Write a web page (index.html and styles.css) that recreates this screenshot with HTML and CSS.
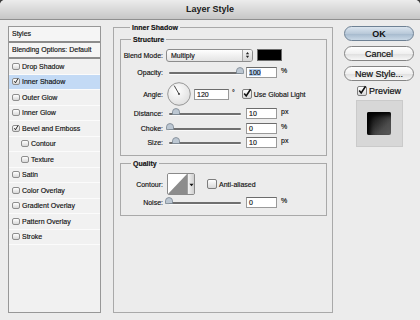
FILE: index.html
```html
<!DOCTYPE html>
<html lang="en">
  <head>
    <meta charset="UTF-8" />
    <title>Layer Style</title>
    <link rel="stylesheet" href="styles.css">
  </head>
  <body>
    <div class="window">
      <div class="titlebar">Layer Style</div>
      <div class="content">
        <!-- left: list of effects -->
        <div class="styles-list">
          <div class="list-head">Styles</div>
          <div class="list-head">Blending Options: Default</div>
          <ul class="effects">
            <li><span class="cb"></span>Drop Shadow</li>
            <li class="selected"><span class="cb"><svg class="tick" viewBox="0 0 10 10"><path d="M1.5 4.5 L4 7.5 L9 -1" /></svg></span>Inner Shadow</li>
            <li><span class="cb"></span>Outer Glow</li>
            <li><span class="cb"></span>Inner Glow</li>
            <li><span class="cb"><svg class="tick" viewBox="0 0 10 10"><path d="M1.5 4.5 L4 7.5 L9 -1" /></svg></span>Bevel and Emboss</li>
            <li class="sub"><span class="cb"></span>Contour</li>
            <li class="sub"><span class="cb"></span>Texture</li>
            <li><span class="cb"></span>Satin</li>
            <li><span class="cb"></span>Color Overlay</li>
            <li><span class="cb"></span>Gradient Overlay</li>
            <li><span class="cb"></span>Pattern Overlay</li>
            <li><span class="cb"></span>Stroke</li>
          </ul>
        </div>

        <!-- middle: settings -->
        <div class="group outer">
          <div class="legend">Inner Shadow</div>
          <div class="group">
            <div class="legend">Structure</div>
            <div class="row blend">
              <label>Blend Mode:</label>
              <div class="select">
                <span>Multiply</span>
                <span class="stepper">
                  <svg viewBox="0 0 6 9"><path d="M1 3.5 L3 1 L5 3.5Z M1 5.5 L3 8 L5 5.5Z" /></svg>
                </span>
              </div>
              <span class="swatch"></span>
            </div>
            <div class="row opacity">
              <label>Opacity:</label>
              <div class="slider"><svg class="thumb" style="left: 74px" viewBox="0 0 8 7"><path d="M0.5 6.5 V3.8 Q0.5 0.8 4 0.5 Q7.5 0.8 7.5 3.8 V6.5Z" /></svg></div>
              <span class="field"><span class="hl">100</span></span>
              <span class="unit">%</span>
            </div>
            <div class="row angle">
              <label>Angle:</label>
              <svg class="dial" viewBox="0 0 24 24">
                <defs>
                  <radialGradient id="dialFill" cx="0.4" cy="0.35" r="0.7">
                    <stop offset="0" stop-color="#ffffff" />
                    <stop offset="1" stop-color="#dedede" />
                  </radialGradient>
                </defs>
                <circle cx="12" cy="12" r="11.3" fill="url(#dialFill)" stroke="#8d8d8d" stroke-width="0.9" />
                <line x1="12" y1="12" x2="7.2" y2="3.6" stroke="#333" stroke-width="0.9" />
                <circle cx="12" cy="12" r="0.9" fill="#333" />
              </svg>
              <span class="field wide">120</span>
              <span class="deg">°</span>
              <span class="cb big"><svg class="tick" viewBox="0 0 10 10"><path d="M1.5 4.5 L4 7.5 L9.5 -1" /></svg></span>
              <span class="cb-label">Use Global Light</span>
            </div>
            <div class="row distance">
              <label>Distance:</label>
              <div class="slider"><svg class="thumb" style="left: 10px" viewBox="0 0 8 7"><path d="M0.5 6.5 V3.8 Q0.5 0.8 4 0.5 Q7.5 0.8 7.5 3.8 V6.5Z" /></svg></div>
              <span class="field">10</span>
              <span class="unit">px</span>
            </div>
            <div class="row choke">
              <label>Choke:</label>
              <div class="slider"><svg class="thumb" style="left: 4px" viewBox="0 0 8 7"><path d="M0.5 6.5 V3.8 Q0.5 0.8 4 0.5 Q7.5 0.8 7.5 3.8 V6.5Z" /></svg></div>
              <span class="field">0</span>
              <span class="unit">%</span>
            </div>
            <div class="row">
              <label>Size:</label>
              <div class="slider"><svg class="thumb" style="left: 10px" viewBox="0 0 8 7"><path d="M0.5 6.5 V3.8 Q0.5 0.8 4 0.5 Q7.5 0.8 7.5 3.8 V6.5Z" /></svg></div>
              <span class="field">10</span>
              <span class="unit">px</span>
            </div>
          </div>

          <div class="group quality">
            <div class="legend">Quality</div>
            <div class="row contour">
              <label>Contour:</label>
              <div class="picker">
                <svg class="curve" viewBox="0 0 20 20" preserveAspectRatio="none">
                  <polygon points="0,0 20,0 0,20" fill="#ffffff" />
                  <polygon points="20,0 20,20 0,20" fill="#8c8c8c" />
                </svg>
                <span class="drop">
                  <svg viewBox="0 0 6 6"><path d="M0.5 2 L5.5 2 L3 5Z" /></svg>
                </span>
              </div>
              <span class="cb big"></span>
              <span class="cb-label">Anti-aliased</span>
            </div>
            <div class="row">
              <label>Noise:</label>
              <div class="slider"><svg class="thumb" style="left: 3px" viewBox="0 0 8 7"><path d="M0.5 6.5 V3.8 Q0.5 0.8 4 0.5 Q7.5 0.8 7.5 3.8 V6.5Z" /></svg></div>
              <span class="field">0</span>
              <span class="unit">%</span>
            </div>
          </div>
        </div>

        <!-- right: buttons and preview -->
        <div class="actions">
          <button class="btn default">OK</button>
          <button class="btn">Cancel</button>
          <button class="btn">New Style...</button>
          <div class="preview-toggle">
            <span class="cb big"><svg class="tick" viewBox="0 0 10 10"><path d="M1.5 4.5 L4 7.5 L9.5 -1" /></svg></span>
            <span>Preview</span>
          </div>
          <div class="preview">
            <div class="sample"></div>
          </div>
        </div>
      </div>
    </div>
  </body>
</html>
```

FILE: styles.css
```css
* {
  margin: 0;
  padding: 0;
  box-sizing: border-box;
}
body {
  background-color: #3a3a3a;
  font-family: "Liberation Sans", Arial, sans-serif;
  font-size: 7px;
  color: #111;
  -webkit-text-stroke: 0.15px #111;
}
.window {
  width: 420px;
  height: 320px;
  background-color: #ececec;
  border-radius: 5px 5px 0 0;
  overflow: hidden;
}
.titlebar {
  height: 20px;
  line-height: 19px;
  text-align: center;
  font-size: 9px;
  font-weight: bold;
  color: #202020;
  -webkit-text-stroke: 0;
  background: linear-gradient(#ececec, #d9d9d9 50%, #c6c6c6);
  border-bottom: 1px solid #8f8f8f;
}
.content {
  display: flex;
  align-items: flex-start;
  padding: 6px 0 0 8px;
}

/* styles list */
.styles-list {
  width: 93px;
  height: 287px;
  border: 1px solid #979797;
  background-color: #f1f1f1;
}
.list-head {
  height: 16px;
  line-height: 14px;
  padding-left: 3px;
  background-color: #f5f5f5;
  border-bottom: 2px solid #8c8c8c;
}
.effects {
  list-style: none;
}
.effects li {
  height: 15.5px;
  display: flex;
  align-items: center;
  gap: 2px;
  padding-left: 3px;
  border-bottom: 1px solid #fbfbfb;
}
.effects li.sub {
  padding-left: 12px;
}
.effects li.selected {
  background-color: #c3daf5;
}

/* checkboxes */
.cb {
  position: relative;
  display: inline-block;
  flex: none;
  width: 8px;
  height: 7px;
  border: 1px solid #8e8e8e;
  border-radius: 2px;
  background: linear-gradient(#ffffff, #d8d8d8);
}
.cb.big {
  width: 10px;
  height: 10px;
  border-color: #7d7d7d;
  border-radius: 2px;
}
.tick {
  position: absolute;
  left: 0;
  top: 0;
  width: 100%;
  height: 100%;
  overflow: visible;
}
.tick path {
  fill: none;
  stroke: #111;
  stroke-width: 1.8;
}
.cb.big .tick path {
  stroke-width: 2;
}
.cb-label {
  margin-left: 2px;
}

/* group boxes */
.group {
  border: 1px solid #a9a9a9;
  padding: 0 0 6px;
}
.legend {
  width: max-content;
  margin: -5px 0 0 10px;
  padding: 0 2px;
  line-height: 9px;
  font-weight: bold;
  background-color: #ececec;
}
.outer {
  width: 220px;
  height: 286px;
  margin: 1px 0 0 12px;
  padding: 0 5px 0 6px;
}
.outer > .group {
  margin-top: 7px;
}

/* rows */
.row {
  display: flex;
  align-items: center;
  height: 14px;
}
.row label {
  width: 42px;
  margin-right: 3px;
  text-align: right;
  flex: none;
}
.row.blend {
  margin-top: 4px;
}
.row.opacity {
  margin-top: 3px;
}
.row.angle {
  height: 24px;
  margin-top: 3px;
}
.row.choke {
  margin-top: 1px;
}
.select {
  display: flex;
  align-items: center;
  justify-content: space-between;
  width: 87px;
  height: 13px;
  padding-left: 4px;
  border: 1px solid #8c8c8c;
  border-radius: 3px;
  background: linear-gradient(#ffffff, #f1f1f1 50%, #e4e4e4);
}
.stepper {
  display: flex;
  align-items: center;
  justify-content: center;
  width: 10px;
  height: 100%;
  border-left: 1px solid #a8a8a8;
  background: linear-gradient(#f6f6f6, #d6d6d6);
  border-radius: 0 2px 2px 0;
}
.stepper svg {
  width: 5px;
  height: 8px;
  fill: #222;
}
.swatch {
  width: 25px;
  height: 12px;
  margin-left: 4px;
  background-color: #000;
  border: 1px solid #6d6d6d;
}
.slider {
  position: relative;
  width: 77px;
  height: 14px;
  margin-right: 3px;
}
.slider::before {
  content: "";
  position: absolute;
  left: 3px;
  right: 2px;
  top: 7px;
  height: 2px;
  border-radius: 1px;
  background-color: #6f6f6f;
  box-shadow: 0 1px 0 #fafafa;
}
.thumb {
  position: absolute;
  top: 2px;
  width: 8px;
  height: 7px;
  transform: translateX(-50%);
}
.thumb path {
  fill: #bcc7d2;
  stroke: #7a8591;
  stroke-width: 0.8;
}
.field {
  width: 31px;
  height: 11px;
  padding-left: 2px;
  line-height: 9px;
  background-color: #fff;
  border: 1px solid #999;
  border-top-color: #6c6c6c;
}
.field.wide {
  width: 35px;
  margin-left: 3px;
}
.hl {
  background-color: #b3d0f2;
}
.unit {
  margin: -3px 0 0 4px;
}
.deg {
  margin: -4px 0 0 3px;
}
.dial {
  width: 24px;
  height: 24px;
  margin-left: 1px;
}
.angle .cb {
  margin-left: 7px;
}

/* quality */
.quality {
  margin-top: 7px;
}
.row.contour {
  height: 22px;
  margin-top: 5px;
}
.picker {
  display: flex;
  width: 28px;
  height: 22px;
  margin-left: 1px;
  border: 1px solid #8a8a8a;
  border-radius: 2px;
  overflow: hidden;
}
.curve {
  width: 19px;
  height: 100%;
}
.drop {
  display: flex;
  align-items: center;
  justify-content: center;
  flex: 1;
  border-left: 1px solid #a0a0a0;
  background: linear-gradient(90deg, #f2f2f2, #cfcfcf);
}
.drop svg {
  width: 5px;
  height: 5px;
  fill: #111;
}
.contour .cb {
  margin-left: 12px;
}

/* buttons and preview */
.actions {
  display: flex;
  flex-direction: column;
  align-items: center;
  width: 70px;
  margin-left: 11px;
}
.btn {
  width: 70px;
  height: 15px;
  margin-bottom: 5px;
  font-family: "Liberation Sans", Arial, sans-serif;
  font-size: 9px;
  color: #111;
  -webkit-text-stroke: 0.2px #111;
  border: 1px solid #858585;
  border-radius: 8px;
  background: linear-gradient(#ffffff, #f0f0f0 50%, #dedede 51%, #f7f7f7);
}
.btn.default {
  font-weight: bold;
  -webkit-text-stroke: 0;
  border-color: #6e8194;
  background: linear-gradient(#dbe5ef, #b9c9d9 50%, #a4b8cc 51%, #c9d8e6);
}
.btn + .btn + .btn {
  margin-bottom: 4px;
}
.preview-toggle {
  display: flex;
  align-items: center;
  gap: 2px;
  height: 11px;
  font-size: 9px;
  -webkit-text-stroke: 0.2px #111;
}
.preview {
  display: flex;
  align-items: center;
  justify-content: center;
  width: 47px;
  height: 47px;
  margin-top: 4px;
  background-color: #d7d7d7;
  border: 1px solid #cacaca;
}
.sample {
  width: 24px;
  height: 23px;
  border-radius: 2px;
  background: linear-gradient(135deg, #111 20%, #4c4c4c 70%, #5a5a5a);
  box-shadow: inset 3px 3px 4px #000;
}
```
